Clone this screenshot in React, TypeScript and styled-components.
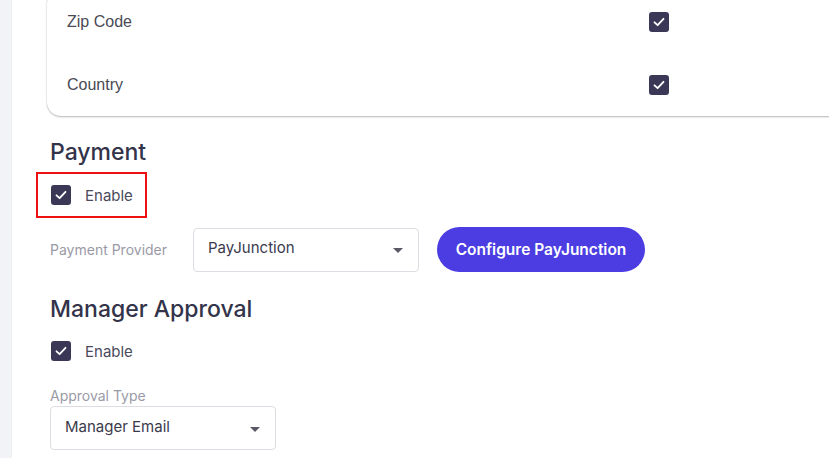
import React from "react";
import styled, { createGlobalStyle } from "styled-components";

const Global = createGlobalStyle`
  html, body { margin: 0; padding: 0; background: #ffffff; overflow: hidden; }
  body { font-family: Inter, "Noto Sans", sans-serif; }
  * { box-sizing: border-box; }
`;

const Page = styled.div`
  display: flex;
  width: 829px;
  height: 458px;
  overflow: hidden;
`;

const SideStrip = styled.div`
  flex: 0 0 12px;
  background: #f1f3f7;
  border-right: 1px solid #eceef2;
`;

const Main = styled.div`
  flex: 1;
  padding-left: 35px;
  display: flex;
  flex-direction: column;
  align-items: flex-start;
`;

const Card = styled.div`
  margin-top: -10px;
  width: 820px;
  background: #fff;
  border-radius: 14px;
  box-shadow: 0 1px 2px rgba(0, 0, 0, 0.28), 0 0 1px rgba(0, 0, 0, 0.12);
  padding: 0 0 0 20px;
`;

const FieldRow = styled.div`
  display: grid;
  grid-template-columns: 582px 20px;
  align-items: center;
  height: 63px;
`;

const FieldLabel = styled.span`
  font-family: "Liberation Sans", Arial, sans-serif;
  font-size: 16px;
  color: #4a4a55;
`;

const Box = styled.span`
  width: 20px;
  height: 20px;
  border-radius: 3px;
  background: #3a3856;
  display: inline-flex;
  align-items: center;
  justify-content: center;
  flex: 0 0 20px;
`;

const Check = () => (
  <Box>
    <svg width="14" height="14" viewBox="0 0 14 14" fill="none">
      <path d="M2.5 7.3 L5.6 10.2 L11.5 3.8" stroke="#ffffff" strokeWidth="1.8" strokeLinecap="round" strokeLinejoin="round" />
    </svg>
  </Box>
);

const Heading = styled.h2<{ $top: number }>`
  margin: ${(p) => p.$top}px 0 0 3px;
  font-size: 23px;
  line-height: 28px;
  font-weight: 500;
  color: #33334a;
`;

const CheckRow = styled.label<{ $top?: number }>`
  display: flex;
  align-items: center;
  gap: 14px;
  margin-top: ${(p) => p.$top ?? 0}px;
  margin-left: 4px;
  font-size: 15px;
  color: #4b4b5c;
`;

const Highlight = styled.div`
  margin-top: 6px;
  margin-left: -11px;
  width: 111px;
  height: 46px;
  border: 2px solid #ee1111;
  display: flex;
  align-items: center;
  padding-left: 9px;
`;

const ProviderRow = styled.div`
  display: flex;
  align-items: center;
  margin-top: 9px;
  margin-left: 3px;
`;

const SmallLabel = styled.span<{ $width?: number }>`
  font-size: 14px;
  line-height: 18px;
  color: #9a9aa6;
  ${(p) => (p.$width ? `width: ${p.$width}px;` : "")}
`;

const SelectBox = styled.div<{ $width: number }>`
  width: ${(p) => p.$width}px;
  height: 44px;
  border: 1px solid #dcdce2;
  border-radius: 4px;
  background: #fff;
  display: flex;
  align-items: center;
  justify-content: space-between;
  padding: 0 15px 4px 14px;
  font-size: 15px;
  color: #3a3a4c;
`;

const Caret = styled.span`
  width: 0;
  height: 0;
  border-left: 5px solid transparent;
  border-right: 5px solid transparent;
  border-top: 5px solid #5a5a66;
  margin-top: 6px;
`;

const PrimaryButton = styled.button`
  margin-left: 18px;
  height: 45px;
  width: 208px;
  border: none;
  border-radius: 23px;
  background: #4b3de2;
  color: #fff;
  font-family: Inter, "Noto Sans", sans-serif;
  font-size: 15.5px;
  font-weight: 600;
  cursor: pointer;
`;

const Stack = styled.div<{ $top: number }>`
  display: flex;
  flex-direction: column;
  gap: 1px;
  margin-top: ${(p) => p.$top}px;
  margin-left: 3px;
`;

export default function App() {
  return (
    <>
      <Global />
      <Page>
        <SideStrip />
        <Main>
          <Card>
            <FieldRow>
              <FieldLabel>Zip Code</FieldLabel>
              <Check />
            </FieldRow>
            <FieldRow>
              <FieldLabel>Country</FieldLabel>
              <Check />
            </FieldRow>
          </Card>

          <Heading $top={22}>Payment</Heading>
          <Highlight>
            <CheckRow>
              <Check />
              Enable
            </CheckRow>
          </Highlight>

          <ProviderRow>
            <SmallLabel $width={143}>Payment Provider</SmallLabel>
            <SelectBox $width={226}>
              PayJunction
              <Caret />
            </SelectBox>
            <PrimaryButton>Configure PayJunction</PrimaryButton>
          </ProviderRow>

          <Heading $top={23}>Manager Approval</Heading>
          <CheckRow $top={18}>
            <Check />
            Enable
          </CheckRow>

          <Stack $top={26}>
            <SmallLabel>Approval Type</SmallLabel>
            <SelectBox $width={226}>
              Manager Email
              <Caret />
            </SelectBox>
          </Stack>
        </Main>
      </Page>
    </>
  );
}
